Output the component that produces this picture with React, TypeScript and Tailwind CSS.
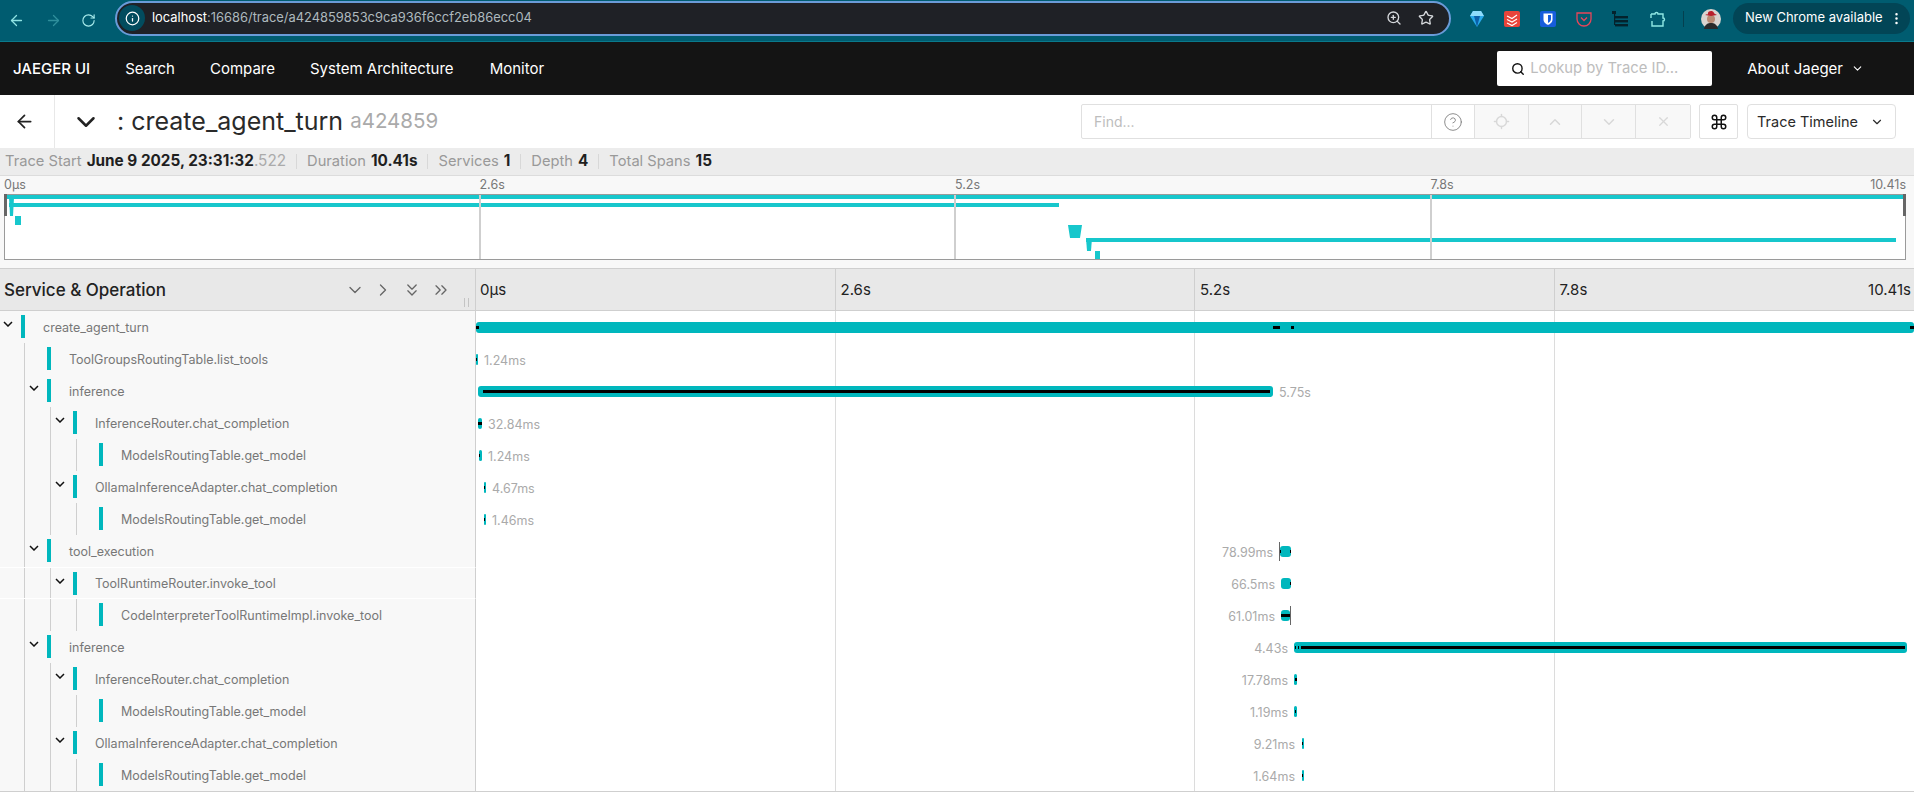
import React from 'react';
import {
  ArrowLeft,
  ArrowRight,
  RotateCw,
  Info,
  ZoomIn,
  Star,
  EllipsisVertical,
  Search,
  ChevronDown,
  ChevronUp,
  ChevronRight,
  ChevronsDown,
  ChevronsRight,
  CircleHelp,
  Locate,
  X,
  Command,
} from 'lucide-react';

type Bar = {
  from: number;
  to: number;
  black?: [number, number][];
  line?: number;
};

type Row = {
  name: string;
  level: number;
  open: boolean;
  bar: Bar;
  label?: string;
  labelLeft?: number;
  labelEnd?: number;
};

// x values are page pixels, the timeline column starts at 476
const rows: Row[] = [
  { name: 'create_agent_turn', level: 0, open: true, bar: { from: 476, to: 1914, black: [[476, 479], [1273, 1280], [1291, 1294], [1910, 1914]] } },
  { name: 'ToolGroupsRoutingTable.list_tools', level: 1, open: false, bar: { from: 476, to: 478, black: [[476, 477]] }, label: '1.24ms', labelLeft: 484 },
  { name: 'inference', level: 1, open: true, bar: { from: 478, to: 1273, black: [[483, 1270]] }, label: '5.75s', labelLeft: 1279 },
  { name: 'InferenceRouter.chat_completion', level: 2, open: true, bar: { from: 478, to: 482, black: [[478, 482]] }, label: '32.84ms', labelLeft: 488 },
  { name: 'ModelsRoutingTable.get_model', level: 3, open: false, bar: { from: 479, to: 482, black: [[479, 480]] }, label: '1.24ms', labelLeft: 488 },
  { name: 'OllamaInferenceAdapter.chat_completion', level: 2, open: true, bar: { from: 484, to: 486, black: [[484, 485]] }, label: '4.67ms', labelLeft: 492 },
  { name: 'ModelsRoutingTable.get_model', level: 3, open: false, bar: { from: 484, to: 486, black: [[484, 485]] }, label: '1.46ms', labelLeft: 492 },
  { name: 'tool_execution', level: 1, open: true, bar: { from: 1280, to: 1291, black: [[1280, 1281], [1290, 1291]], line: 1279 }, label: '78.99ms', labelEnd: 1273 },
  { name: 'ToolRuntimeRouter.invoke_tool', level: 2, open: true, bar: { from: 1281, to: 1291, black: [[1290, 1291]] }, label: '66.5ms', labelEnd: 1275 },
  { name: 'CodeInterpreterToolRuntimeImpl.invoke_tool', level: 3, open: false, bar: { from: 1281, to: 1290, black: [[1281, 1290]], line: 1290 }, label: '61.01ms', labelEnd: 1275 },
  { name: 'inference', level: 1, open: true, bar: { from: 1294, to: 1907, black: [[1295, 1296], [1298, 1299], [1301, 1905]] }, label: '4.43s', labelEnd: 1288 },
  { name: 'InferenceRouter.chat_completion', level: 2, open: true, bar: { from: 1294, to: 1297, black: [[1295, 1297]] }, label: '17.78ms', labelEnd: 1288 },
  { name: 'ModelsRoutingTable.get_model', level: 3, open: false, bar: { from: 1294, to: 1297, black: [[1295, 1296]] }, label: '1.19ms', labelEnd: 1288 },
  { name: 'OllamaInferenceAdapter.chat_completion', level: 2, open: true, bar: { from: 1302, to: 1304, black: [[1302, 1303]] }, label: '9.21ms', labelEnd: 1295 },
  { name: 'ModelsRoutingTable.get_model', level: 3, open: false, bar: { from: 1302, to: 1304, black: [[1302, 1303]] }, label: '1.64ms', labelEnd: 1295 },
];

const Caret = () => (
  <svg width="10" height="6" viewBox="0 0 10 6" fill="none" stroke="#111" strokeWidth="1.5">
    <path d="M1 1l4 4 4-4" />
  </svg>
);

const BrowserBar = () => (
  <div className="h-[42px] flex items-center bg-[#005c70] border-b border-[#0a7a8c] relative">
    <ArrowLeft size={17} strokeWidth={1.8} className="absolute left-[8px] top-[12px] text-[#8fe3e3]" />
    <ArrowRight size={17} strokeWidth={1.8} className="absolute left-[45px] top-[12px] text-[#2f8f9c]" />
    <RotateCw size={15} strokeWidth={1.8} className="absolute left-[81px] top-[13px] text-[#a8ecec]" />
    <div className="ml-[115px] w-[1336px] h-[35px] mt-[-5px] rounded-full bg-[#1f2126] border-2 border-[#6a9bd8] flex items-center">
      <div className="ml-[2px] w-[26px] h-[26px] rounded-full bg-[#024c5e] flex items-center justify-center">
        <Info size={15} className="text-white" />
      </div>
      <span className="ml-[7px] text-[12.9px] text-[#aeb9be] leading-none">
        <span className="text-white">localhost</span>:16686/trace/a424859853c9ca936f6ccf2eb86ecc04
      </span>
      <ZoomIn size={16} className="ml-auto text-[#d5d8dc]" />
      <Star size={16} className="ml-[16px] mr-[15px] text-[#d5d8dc]" />
    </div>
    <div className="ml-[19px] flex items-center mt-[-3px]">
      <svg width="14" height="18" viewBox="0 0 14 18" className="mr-[20px]">
        <path d="M3 1h8l3 5-7 11L0 6z" fill="#29a9ea" />
        <path d="M3 1h8l3 5H0z" fill="#8fdcfb" />
        <path d="M4 6h6l-3 11z" fill="#0b5fa8" />
      </svg>
      <svg width="16" height="16" viewBox="0 0 16 16" className="mr-[20px]">
        <rect width="16" height="16" rx="2" fill="#e8443a" />
        <path d="M3 5l5 2.5L13 4M3 8.5l5 2.5 5-3M3 12l5 2.5 5-3" stroke="#fff" strokeWidth="1.1" fill="none" />
      </svg>
      <svg width="16" height="16" viewBox="0 0 16 16" className="mr-[20px]">
        <rect width="16" height="16" rx="2" fill="#175ddc" />
        <path d="M3.5 2.5h9v6c0 3-2.5 4.5-4.5 5.5-2-1-4.5-2.5-4.5-5.5z" fill="#fff" />
        <path d="M8 4v8c1.5-.8 3-2 3-4V4z" fill="#175ddc" />
      </svg>
      <svg width="16" height="16" viewBox="0 0 16 16" fill="none" className="mr-[20px]" stroke="#e8455a" strokeWidth="1.3">
        <path d="M1 2h14v6a7 7 0 0 1-14 0z" />
        <path d="M5 6.5L8 9.5l3-3" />
      </svg>
      <svg width="16" height="16" viewBox="0 0 16 16" fill="#04222c" className="mr-[21px]">
        <rect x="0" y="0" width="4" height="3" />
        <rect x="2" y="3" width="1.2" height="11" />
        <rect x="3" y="5" width="13" height="2.4" />
        <rect x="3" y="9" width="13" height="2.4" />
        <rect x="3" y="13" width="13" height="2.4" />
      </svg>
      <svg width="17" height="17" viewBox="0 0 17 17" fill="none" className="mr-[17px]" stroke="#8fe8e4" strokeWidth="1.4">
        <path d="M2 3h4c0-2 3-2 3 0h5v4c2 0 2 3 0 3v5H3v-5M2 3v4" />
      </svg>
      <div className="w-px h-[16px] bg-[#04404f] mr-[17px]" />
      <svg width="20" height="20" viewBox="0 0 20 20" className="mr-[12px]">
        <circle cx="10" cy="10" r="10" fill="#d9d4cf" />
        <path d="M3 20c1-5 4-6 7-6s6 1 7 6z" fill="#2a2a2a" />
        <circle cx="10" cy="10" r="4" fill="#b98a72" />
        <path d="M4 6c2-1 3 0 3-2s5-3 6 0c0 1 2 1 3 2l-6 1z" fill="#b8202c" />
      </svg>
    </div>
    <div className="w-[177px] h-[31px] mt-[-5px] rounded-full bg-[#024556] flex items-center text-white text-[13px] pl-[12px]">
      New Chrome available
      <EllipsisVertical size={15} className="ml-[6px]" />
    </div>
  </div>
);

const JaegerNav = () => (
  <div className="h-[53px] bg-[#141414] flex items-center text-white text-[15px]">
    <span className="ml-[13px] pt-[1px] font-medium">JAEGER UI</span>
    <span className="ml-[35px] pt-[1px]">Search</span>
    <span className="ml-[35px] pt-[1px]">Compare</span>
    <span className="ml-[35px] pt-[1px]">System Architecture</span>
    <span className="ml-[36px] pt-[1px]">Monitor</span>
    <div className="ml-auto w-[215px] h-[35px] bg-white rounded-[2px] flex items-center pl-[14px] text-[#bdbdbd]">
      <Search size={14} strokeWidth={2.4} className="text-[#111]" />
      <span className="ml-[5px] text-[14.8px]">Lookup by Trace ID...</span>
    </div>
    <span className="ml-[35px] pt-[1px]">About Jaeger</span>
    <ChevronDown size={13} className="ml-[8px] mr-[50px]" />
  </div>
);

const TraceHeader = () => (
  <div className="h-[53px] bg-white flex items-center">
    <div className="w-[55px] h-full border-r border-[#e8e8e8] flex items-center justify-center pr-[5px]">
      <ArrowLeft size={21} strokeWidth={2} className="text-[#222]" />
    </div>
    <ChevronDown size={30} strokeWidth={2} className="ml-[16px] text-[#222]" />
    <span className="ml-[16px] text-[25px] text-[#2a2a2a] leading-none">: create_agent_turn</span>
    <span className="ml-[7px] text-[20.5px] text-[#aaa] leading-none">a424859</span>
    <div className="ml-auto h-[35px] flex border border-[#e0e0e0] rounded-[2px] text-[#d8d8d8]">
      <div className="w-[350px] flex items-center pl-[12px] text-[14px] text-[#bdbdbd] border-r border-[#e0e0e0]">Find...</div>
      <div className="w-[43px] flex items-center justify-center border-r border-[#e0e0e0]">
        <CircleHelp size={20} strokeWidth={1} className="text-[#777]" />
      </div>
      <div className="w-[54px] flex items-center justify-center border-r border-[#e0e0e0] bg-[#f8f8f8]">
        <Locate size={17} />
      </div>
      <div className="w-[53px] flex items-center justify-center border-r border-[#e0e0e0] bg-[#f8f8f8]">
        <ChevronUp size={18} />
      </div>
      <div className="w-[54px] flex items-center justify-center border-r border-[#e0e0e0] bg-[#f8f8f8]">
        <ChevronDown size={18} />
      </div>
      <div className="w-[54px] flex items-center justify-center bg-[#f8f8f8]">
        <X size={15} />
      </div>
    </div>
    <div className="ml-[8px] w-[39px] h-[35px] border border-[#e0e0e0] rounded-[2px] flex items-center justify-center">
      <Command size={18} strokeWidth={2} className="text-[#111]" />
    </div>
    <div className="ml-[9px] mr-[18px] w-[149px] h-[35px] border border-[#e0e0e0] rounded-[4px] flex items-center pl-[9px] text-[14.5px] text-[#2a2a2a]">
      Trace Timeline
      <ChevronDown size={14} className="ml-[12px]" />
    </div>
  </div>
);

const Stat = ({ label, children, last }: { label: string; children: React.ReactNode; last?: boolean }) => (
  <div className={last ? 'flex items-center' : 'flex items-center pr-[10px] mr-[10px] border-r border-[#d8d8d8] h-[15px]'}>
    <span className="text-[#999]">{label}</span>
    <span className="ml-[5px] text-[15.3px] text-[#1f1f1f] font-bold">{children}</span>
  </div>
);

const TraceStats = () => (
  <div className="h-[28px] bg-[#ececec] border-b border-[#dcdcdc] flex items-center pl-[5px] text-[14.7px]">
    <Stat label="Trace Start">
      June 9 2025, 23:31:32<span className="text-[#aaa] font-normal">.522</span>
    </Stat>
    <Stat label="Duration">10.41s</Stat>
    <Stat label="Services">1</Stat>
    <Stat label="Depth">4</Stat>
    <Stat label="Total Spans" last>
      15
    </Stat>
  </div>
);

const Minimap = () => (
  <div className="h-[93px] bg-[#f8f8f8] border-b border-[#cfcfcf] px-[4px] pr-[8px]">
    <div className="h-[18px] flex justify-between items-center text-[12.5px] text-[#777] leading-none">
      <div className="flex-1">0µs</div>
      <div className="flex-1">2.6s</div>
      <div className="flex-1">5.2s</div>
      <div className="flex-1 flex justify-between">
        <span>7.8s</span>
        <span>10.41s</span>
      </div>
    </div>
    <svg width="1902" height="66" viewBox="0 0 1902 66" className="block">
      <rect width="1902" height="66" fill="#fff" />
      <g fill="#17c7cc">
        <rect x="2" y="1" width="1900" height="4" />
        <path d="M5 4h5l-1 18H6z" />
        <rect x="5" y="9" width="1050" height="4" />
        <rect x="11" y="22" width="6" height="9" />
        <path d="M1064 31h14l-2 13h-10z" />
        <path d="M1082 44h6l-1 13h-4z" />
        <rect x="1082" y="44" width="810" height="4" />
        <rect x="1091" y="57" width="5" height="8" />
      </g>
      <g fill="#cfcfcf">
        <rect x="475" y="0" width="2" height="66" />
        <rect x="950" y="0" width="2" height="66" />
        <rect x="1426" y="0" width="2" height="66" />
      </g>
      <rect x="0" y="0" width="1902" height="1" fill="#9a9a9a" />
      <rect x="0" y="65" width="1902" height="1" fill="#9a9a9a" />
      <rect x="0" y="0" width="1" height="66" fill="#9a9a9a" />
      <rect x="1901" y="0" width="1" height="66" fill="#9a9a9a" />
      <rect x="0" y="0" width="3" height="22" fill="#666" />
      <rect x="1899" y="0" width="3" height="22" fill="#666" />
    </svg>
  </div>
);

const TimelineHeader = () => (
  <div className="h-[42px] bg-[#e8e8e8] border-b border-[#cfcfcf] flex">
    <div className="w-[476px] shrink-0 border-r border-[#cfcfcf] flex items-center pl-[4px] relative">
      <span className="text-[17px] font-medium text-[#222] mt-[2px]">Service &amp; Operation</span>
      <ChevronDown size={20} strokeWidth={1.6} className="ml-[179px] text-[#666]" />
      <ChevronRight size={20} strokeWidth={1.6} className="ml-[8px] text-[#666]" />
      <ChevronsDown size={20} strokeWidth={1.6} className="ml-[9px] text-[#666]" />
      <ChevronsRight size={20} strokeWidth={1.6} className="ml-[9px] text-[#666]" />
      <div className="absolute right-[6px] bottom-[3px] w-[5px] h-[9px] border-x border-[#c4c4c4]" />
    </div>
    <div className="flex-1 grid grid-cols-4 text-[15px] text-[#222]">
      <div className="pl-[4px] pt-[1px] border-r border-[#cfcfcf] flex items-center">0µs</div>
      <div className="pl-[5px] pt-[1px] border-r border-[#cfcfcf] flex items-center">2.6s</div>
      <div className="pl-[5px] pt-[1px] border-r border-[#cfcfcf] flex items-center">5.2s</div>
      <div className="pl-[5px] pt-[1px] pr-[3px] flex items-center justify-between">
        <span>7.8s</span>
        <span>10.41s</span>
      </div>
    </div>
  </div>
);

const SpanBar = ({ bar }: { bar: Bar }) => (
  <div
    className="absolute top-[11px] h-[11px] rounded-[3px] bg-[#00b7bd]"
    style={{ left: bar.from - 476, width: bar.to - bar.from }}
  >
    {bar.black?.map(([a, b]) => (
      <div
        key={a}
        className="absolute top-[4px] h-[3px] bg-black"
        style={{ left: a - bar.from, width: b - a }}
      />
    ))}
    {bar.line !== undefined && (
      <div className="absolute top-[-4px] h-[19px] w-px bg-[#666]" style={{ left: bar.line - bar.from }} />
    )}
  </div>
);

const TraceRow = ({ row, highlight }: { row: Row; highlight: boolean }) => (
  <div className="h-[32px] flex">
    <div
      className={
        highlight
          ? 'w-[476px] shrink-0 flex bg-[#f8f8f8] border-r border-[#cfcfcf] border-y border-y-white box-border'
          : 'w-[476px] shrink-0 flex bg-[#f8f8f8] border-r border-[#cfcfcf]'
      }
    >
      {Array.from({ length: row.level }).map((_, i) => (
        <div key={i} className="w-[26px] h-full shrink-0 pr-[1px]">
          <div className="h-full border-r border-[#cfcfcf]" />
        </div>
      ))}
      <div className="w-[21px] shrink-0 pt-[10px] pl-[3px]">{row.open && <Caret />}</div>
      <div className="w-[4px] h-[23px] mt-[4px] shrink-0 bg-[#00b7bd]" />
      <span className="ml-[18px] pt-[2px] self-center text-[12.5px] text-[#777] whitespace-nowrap">
        {row.name}
      </span>
    </div>
    <div className="flex-1 relative">
      <SpanBar bar={row.bar} />
      {row.label && (
        <span
          className="absolute top-[9px] text-[12.5px] text-[#aaa] whitespace-nowrap"
          style={
            row.labelLeft !== undefined
              ? { left: row.labelLeft - 476 }
              : { right: 1914 - (row.labelEnd as number) }
          }
        >
          {row.label}
        </span>
      )}
    </div>
  </div>
);

const App = () => {
  return (
    <div className="w-[1914px] h-[798px] overflow-hidden bg-white font-['Inter',sans-serif]">
      <BrowserBar />
      <JaegerNav />
      <TraceHeader />
      <TraceStats />
      <Minimap />
      <TimelineHeader />
      <div className="relative border-b border-[#cfcfcf]">
        <div className="absolute top-0 bottom-0 left-[476px] right-0 grid grid-cols-4">
          <div className="border-r border-[#dcdcdc]" />
          <div className="border-r border-[#dcdcdc]" />
          <div className="border-r border-[#dcdcdc]" />
          <div />
        </div>
        {rows.map((row, i) => (
          <TraceRow key={i} row={row} highlight={i === 8} />
        ))}
      </div>
    </div>
  );
};

export default App;
